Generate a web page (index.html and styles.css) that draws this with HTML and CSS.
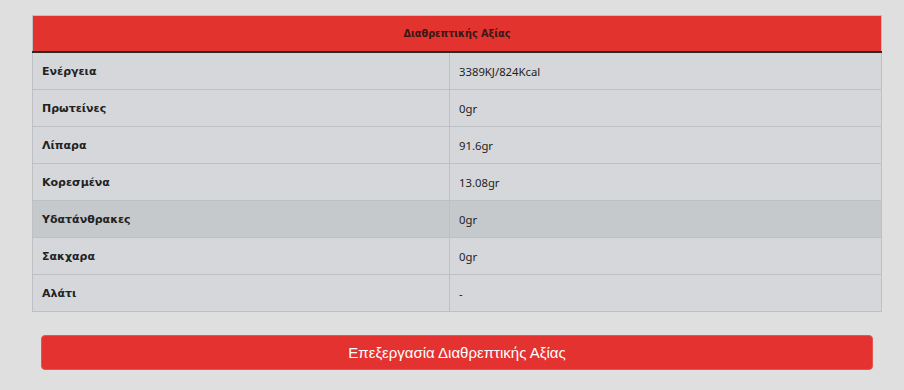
FILE: index.html
```html
<!DOCTYPE html>
<html lang="el">
<head>
    <meta charset="UTF-8">
    <meta name="viewport" content="width=device-width, initial-scale=1.0">
    <title>Διαθρεπτική Αξία</title>
    <link rel="stylesheet" href="styles.css">
</head>
<body>
    <div class="nutrition-container">
        <table class="nutrition-table">
            <thead>
                <tr>
                    <th colspan="2">Διαθρεπτικής Αξίας</th>
                </tr>
            </thead>
            <tbody>
                <tr><td>Ενέργεια</td><td>3389KJ/824Kcal</td></tr>
                <tr><td>Πρωτείνες</td><td>0gr</td></tr>
                <tr><td>Λίπαρα</td><td>91.6gr</td></tr>
                <tr><td>Κορεσμένα</td><td>13.08gr</td></tr>
                <tr class="hovered"><td>Υδατάνθρακες</td><td>0gr</td></tr>
                <tr><td>Σακχαρα</td><td>0gr</td></tr>
                <tr><td>Αλάτι</td><td>-</td></tr>
            </tbody>
        </table>
        <button class="edit-btn">Επεξεργασία Διαθρεπτικής Αξίας</button>
    </div>
</body>
</html>
```

FILE: styles.css
```css
body {
    font-family: "DejaVu Sans", Verdana, sans-serif;
    margin: 0;
    padding: 0;
    background-color: #dfdfdf;
}

.nutrition-container {
    padding: 15px 22px 0 32px;
}

.nutrition-table {
    width: 850px;
    border-collapse: collapse;
    border: 1px solid #bfc0c4;
}

.nutrition-table th {
    background-color: #e2332f;
    color: #3b1715;
    font-size: 9.7px;
    font-weight: bold;
    height: 35px;
    padding: 0;
    border-bottom: 2px solid #2a2a2a;
}

.nutrition-table td {
    background-color: #d6d7da;
    height: 36px;
    padding: 0 0 0 9px;
    border: 1px solid #bfc0c4;
    font-size: 11px;
    color: #222;
}

.nutrition-table td:first-child {
    width: 407px;
    font-weight: bold;
}

.nutrition-table td:last-child {
    font-family: "Noto Sans", "Open Sans", sans-serif;
    font-size: 11.3px;
}

.nutrition-table tr.hovered td {
    background-color: #c6c9cc;
}

.edit-btn {
    display: block;
    width: 832px;
    height: 35px;
    margin: 23px 0 0 9px;
    background-color: #e3322f;
    color: #fff;
    border: 1px solid #e65450;
    border-radius: 4px;
    font-family: "Liberation Sans", Arial, sans-serif;
    font-size: 15px;
    cursor: pointer;
}
```
